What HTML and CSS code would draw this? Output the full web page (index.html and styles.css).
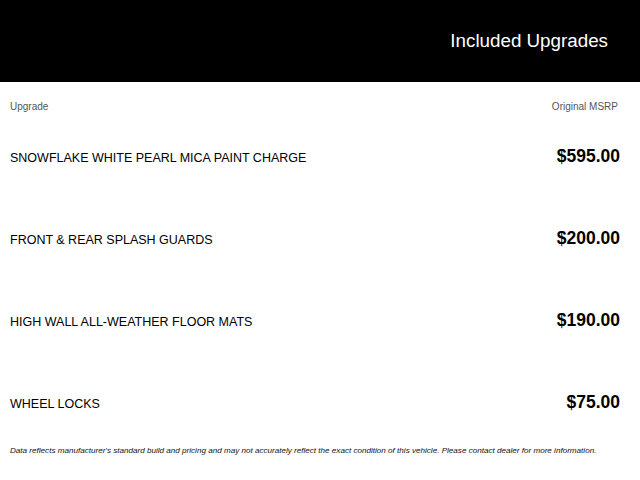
FILE: index.html
```html
<!DOCTYPE html>
<html>
<head>
<meta charset="utf-8">
<link rel="stylesheet" href="styles.css">
</head>
<body>
<header class="banner"><h1 class="banner-title">Included Upgrades</h1></header>
<main class="table">
  <div class="table-head">
    <span class="label">Upgrade</span>
    <span class="label">Original MSRP</span>
  </div>
  <div class="row"><span class="name">SNOWFLAKE WHITE PEARL MICA PAINT CHARGE</span><span class="price">$595.00</span></div>
  <div class="row"><span class="name">FRONT &amp; REAR SPLASH GUARDS</span><span class="price">$200.00</span></div>
  <div class="row"><span class="name">HIGH WALL ALL-WEATHER FLOOR MATS</span><span class="price">$190.00</span></div>
  <div class="row"><span class="name">WHEEL LOCKS</span><span class="price">$75.00</span></div>
  <p class="disclaimer">Data reflects manufacturer's standard build and pricing and may not accurately reflect the exact condition of this vehicle. Please contact dealer for more information.</p>
</main>
</body>
</html>
```
FILE: styles.css
```css
html, body { margin: 0; padding: 0; background: #fff; }
body { font-family: "Liberation Sans", Arial, sans-serif; color: #000; }
.banner {
  height: 82px;
  background: #000;
  display: flex;
  align-items: center;
  justify-content: flex-end;
  padding-right: 32px;
}
.banner-title { margin: 0; font-size: 18.8px; font-weight: normal; color: #fff; line-height: 1; }
.table { padding: 0 20px 0 10px; }
.table-head {
  display: flex;
  justify-content: space-between;
  padding-top: 18px;
  height: 15px;
  line-height: 14px;
}
.label { font-size: 10px; color: #555; }
.table-head .label:last-child { margin-right: 2px; }
.row {
  box-sizing: border-box;
  height: 82px;
  padding-top: 31px;
  display: flex;
  align-items: baseline;
  justify-content: space-between;
}
.name { font-size: 12.5px; }
.price { font-size: 17.5px; font-weight: bold; }
.disclaimer {
  margin: 2px 0 0;
  font-size: 8.1px;
  line-height: 12px;
  font-style: italic;
  color: #111;
}
```
